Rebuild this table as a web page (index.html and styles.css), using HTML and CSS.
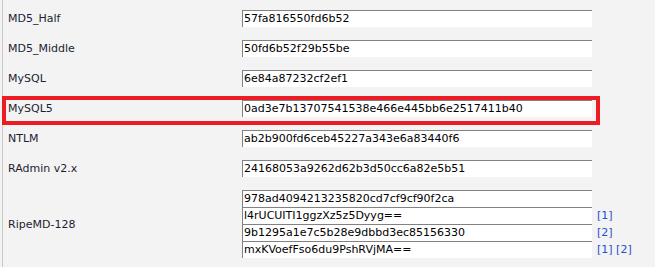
FILE: index.html
```html
<!DOCTYPE html>
<html lang="en">
<head>
    <meta charset="UTF-8">
    <title>Hash results</title>
    <link rel="stylesheet" href="styles.css">
</head>
<body>
    <div class="panel">
        <div class="row">
            <div class="label">MD5_Half</div>
            <div class="fields"><div class="field">57fa816550fd6b52</div></div>
        </div>
        <div class="row">
            <div class="label">MD5_Middle</div>
            <div class="fields"><div class="field">50fd6b52f29b55be</div></div>
        </div>
        <div class="row">
            <div class="label">MySQL</div>
            <div class="fields"><div class="field">6e84a87232cf2ef1</div></div>
        </div>
        <!-- marked row -->
        <div class="row marked">
            <div class="label">MySQL5</div>
            <div class="fields"><div class="field">0ad3e7b13707541538e466e445bb6e2517411b40</div></div>
        </div>
        <div class="row">
            <div class="label">NTLM</div>
            <div class="fields"><div class="field">ab2b900fd6ceb45227a343e6a83440f6</div></div>
        </div>
        <div class="row">
            <div class="label">RAdmin v2.x</div>
            <div class="fields"><div class="field">24168053a9262d62b3d50cc6a82e5b51</div></div>
        </div>
        <div class="row">
            <div class="label">RipeMD-128</div>
            <div class="fields">
                <div class="line"><div class="field">978ad4094213235820cd7cf9cf90f2ca</div></div>
                <div class="line"><div class="field">l4rUCUITI1ggzXz5z5Dyyg==</div><span class="refs"><a href="#">[1]</a></span></div>
                <div class="line"><div class="field">9b1295a1e7c5b28e9dbbd3ec85156330</div><span class="refs"><a href="#">[2]</a></span></div>
                <div class="line"><div class="field">mxKVoefFso6du9PshRVjMA==</div><span class="refs"><a href="#">[1]</a> <a href="#">[2]</a></span></div>
            </div>
        </div>
    </div>
</body>
</html>
```

FILE: styles.css
```css
body {
    margin: 0;
    background-color: #f3f3f3;
    font-family: "DejaVu Sans", Verdana, sans-serif;
    font-size: 11px;
    color: #1e1e32;
}
.panel {
    margin-left: 2px;
    border-left: 1px solid #c8c8c8;
    padding-top: 10px;
    min-height: 100vh;
    box-sizing: border-box;
}
.row {
    display: flex;
    align-items: center;
    margin-bottom: 13px;
    position: relative;
}
.label {
    width: 239px;
    padding-left: 5px;
    box-sizing: border-box;
}
.fields {
    display: flex;
    flex-direction: column;
}
.line {
    display: flex;
    align-items: center;
}
.field {
    width: 350px;
    height: 17px;
    box-sizing: border-box;
    border-top: 1px solid #828282;
    border-left: 1px solid #828282;
    background: #fff;
    padding-left: 1px;
    line-height: 16px;
    color: #000;
    white-space: nowrap;
}
.refs {
    margin-left: 5px;
}
.refs a {
    color: #2a4fd0;
    text-decoration: none;
}
.marked::after {
    content: "";
    position: absolute;
    top: -4px;
    left: -1px;
    width: 598px;
    height: 29px;
    box-sizing: border-box;
    border: 4px solid #ed1c24;
}
```
